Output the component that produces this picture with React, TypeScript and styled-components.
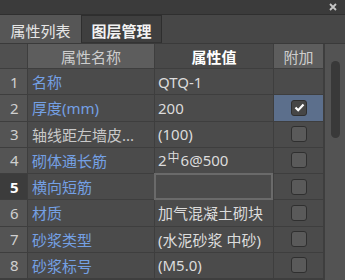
import React from "react";
import styled, { createGlobalStyle, css } from "styled-components";

const Global = createGlobalStyle`
  html, body { margin: 0; padding: 0; background: #4a4a4a; }
  body { font-family: "Noto Sans", "Noto Sans CJK SC", sans-serif; }
`;

const Panel = styled.div`
  width: 345px;
  height: 280px;
  overflow: hidden;
  background: #4a4a4a;
  display: flex;
  flex-direction: column;
`;

const TitleBar = styled.div`
  height: 14px;
  flex: none;
  background: #3b3b3b;
  border-bottom: 1px solid #2f2f2f;
  display: flex;
  align-items: center;
  justify-content: flex-end;
  padding-right: 8px;
`;

const TabBar = styled.div`
  height: 28px;
  flex: none;
  display: flex;
  background: #474747;
  border-bottom: 1px solid #3a3a3a;
`;

const Tab = styled.div<{ $active?: boolean }>`
  width: 81px;
  display: flex;
  align-items: center;
  justify-content: center;
  font-size: 15px;
  font-weight: ${(p) => (p.$active ? 400 : 700)};
  color: ${(p) => (p.$active ? "#e6e6e6" : "#f2f2f2")};
  background: ${(p) => (p.$active ? "#565656" : "#3f3f3f")};
  box-sizing: border-box;
  padding-top: 2px;
  ${(p) =>
    !p.$active &&
    css`
      border: 1px solid #2e2e2e;
      border-bottom-color: #333;
    `}
`;

const Body = styled.div`
  flex: 1;
  display: flex;
  min-height: 0;
`;

const Grid = styled.div`
  width: 324px;
  flex: none;
  display: grid;
  grid-template-columns: 27px 126px 118px 49px;
  grid-template-rows: 24px;
  grid-auto-rows: 25.25px;
  gap: 1px;
  background: #3e3e3e;
  border-right: 1px solid #3e3e3e;
  align-content: start;
`;

const HeadCell = styled.div<{ $tone: "light" | "dark" | "num" }>`
  display: flex;
  align-items: center;
  justify-content: center;
  font-size: 15px;
  background: ${(p) => (p.$tone === "light" ? "#5d5d5d" : p.$tone === "dark" ? "#494949" : "#505050")};
  color: ${(p) => (p.$tone === "dark" ? "#ffffff" : "#cdcdcd")};
  font-weight: ${(p) => (p.$tone === "dark" ? 700 : 400)};
`;

const NumCell = styled.div<{ $current?: boolean }>`
  display: flex;
  align-items: center;
  padding-left: 10px;
  font-size: 15px;
  background: ${(p) => (p.$current ? "#3c3c3c" : "#545454")};
  color: ${(p) => (p.$current ? "#ffffff" : "#cfcfcf")};
  font-weight: ${(p) => (p.$current ? 700 : 400)};
`;

const NameCell = styled.div<{ $plain?: boolean }>`
  display: flex;
  align-items: center;
  padding-left: 4px;
  font-size: 15px;
  white-space: nowrap;
  overflow: hidden;
  background: #4b4b4b;
  color: ${(p) => (p.$plain ? "#c9c9c9" : "#74a0e4")};
`;

const ValueCell = styled.div`
  display: flex;
  align-items: center;
  padding-left: 3px;
  font-size: 15px;
  white-space: nowrap;
  overflow: hidden;
  background: #4b4b4b;
  color: #dcdcdc;
`;

const EditBox = styled.div`
  background: #4b4b4b;
  box-sizing: border-box;
  border: 2px solid #6a6a6a;
  margin: -1px 0 -1px -1px;
`;

const Sym = styled.span`
  font-size: 12px;
  position: relative;
  top: -3px;
  margin: 0 1px;
`;

const ExtraCell = styled.div<{ $selected?: boolean }>`
  display: flex;
  align-items: center;
  justify-content: center;
  background: ${(p) => (p.$selected ? "#5c6f8c" : "#4b4b4b")};
  padding-left: 1px;
`;

const Box = styled.div<{ $checked?: boolean }>`
  width: 16px;
  height: 16px;
  box-sizing: border-box;
  border: 1px solid #2f2f2f;
  border-radius: 3px;
  background: ${(p) => (p.$checked ? "#464646" : "#5a5a5a")};
  display: flex;
  align-items: center;
  justify-content: center;
`;

const Track = styled.div`
  flex: 1;
  background: #535353;
  padding: 17px 0 0 6px;
`;

const Thumb = styled.div`
  width: 9px;
  height: 77px;
  border-radius: 5px;
  background: #393939;
`;

type Row = {
  name: string;
  value?: React.ReactNode;
  plain?: boolean;
  check?: "none" | "on" | "off";
  edit?: boolean;
};

const rows: Row[] = [
  { name: "名称", value: "QTQ-1", check: "none" },
  { name: "厚度(mm)", value: "200", check: "on" },
  { name: "轴线距左墙皮...", value: "(100)", plain: true, check: "off" },
  { name: "砌体通长筋", value: <>2<Sym>中</Sym>6@500</>, check: "off" },
  { name: "横向短筋", edit: true, check: "off" },
  { name: "材质", value: "加气混凝土砌块", check: "off" },
  { name: "砂浆类型", value: "(水泥砂浆 中砂)", check: "off" },
  { name: "砂浆标号", value: "(M5.0)", check: "off" },
];

export default function App() {
  return (
    <Panel>
      <Global />
      <TitleBar>
        <svg width="8" height="8" viewBox="0 0 8 8">
          <path d="M1 1L7 7M7 1L1 7" stroke="#c8c8c8" strokeWidth="1.8" />
        </svg>
      </TitleBar>
      <TabBar>
        <Tab $active>属性列表</Tab>
        <Tab>图层管理</Tab>
      </TabBar>
      <Body>
        <Grid>
          <HeadCell $tone="num" />
          <HeadCell $tone="light">属性名称</HeadCell>
          <HeadCell $tone="dark">属性值</HeadCell>
          <HeadCell $tone="light">附加</HeadCell>
          {rows.map((r, i) => (
            <React.Fragment key={i}>
              <NumCell $current={r.edit}>{i + 1}</NumCell>
              <NameCell $plain={r.plain}>{r.name}</NameCell>
              {r.edit ? <EditBox /> : <ValueCell>{r.value}</ValueCell>}
              <ExtraCell $selected={r.check === "on"}>
                {r.check !== "none" && (
                  <Box $checked={r.check === "on"}>
                    {r.check === "on" && (
                      <svg width="11" height="9" viewBox="0 0 11 9">
                        <path d="M1.5 4.5L4.2 7.2L9.5 1.5" fill="none" stroke="#ffffff" strokeWidth="2.2" />
                      </svg>
                    )}
                  </Box>
                )}
              </ExtraCell>
            </React.Fragment>
          ))}
        </Grid>
        <Track>
          <Thumb />
        </Track>
      </Body>
    </Panel>
  );
}
